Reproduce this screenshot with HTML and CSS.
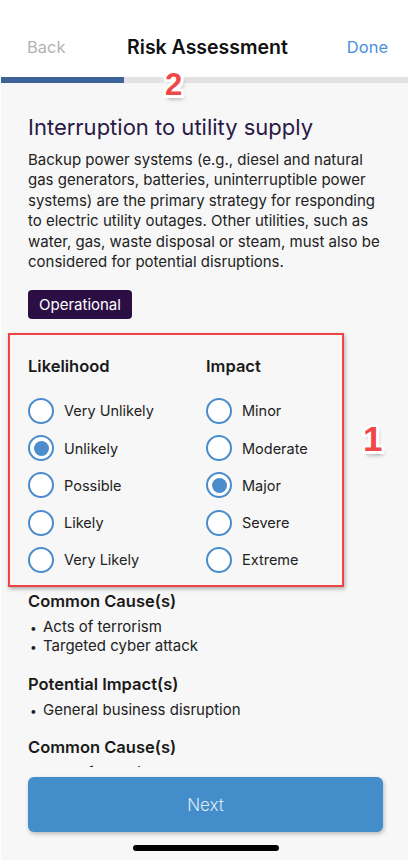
FILE: index.html
```html
<!DOCTYPE html>
<html lang="en">
<head>
<meta charset="utf-8">
<title>Risk Assessment</title>
<link rel="stylesheet" href="styles.css">
</head>
<body>
<div class="screen">
  <header class="nav">
    <span class="nav-back">Back</span>
    <span class="nav-title">Risk Assessment</span>
    <span class="nav-done">Done</span>
  </header>
  <div class="progress"><div class="progress-fill" style="width:123px"></div></div>

  <main class="content">
    <h1 class="risk-title">Interruption to utility supply</h1>
    <p class="risk-desc">Backup power systems (e.g., diesel and natural gas generators, batteries, uninterruptible power systems) are the primary strategy for responding to electric utility outages. Other utilities, such as water, gas, waste disposal or steam, must also be considered for potential disruptions.</p>
    <span class="badge">Operational</span>

    <div class="assessment">
      <div class="group">
        <h2 class="group-title">Likelihood</h2>
        <ul class="options">
          <li class="option"><span class="radio"></span><span class="option-label">Very Unlikely</span></li>
          <li class="option"><span class="radio checked"></span><span class="option-label">Unlikely</span></li>
          <li class="option"><span class="radio"></span><span class="option-label">Possible</span></li>
          <li class="option"><span class="radio"></span><span class="option-label">Likely</span></li>
          <li class="option"><span class="radio"></span><span class="option-label">Very Likely</span></li>
        </ul>
      </div>
      <div class="group">
        <h2 class="group-title">Impact</h2>
        <ul class="options">
          <li class="option"><span class="radio"></span><span class="option-label">Minor</span></li>
          <li class="option"><span class="radio"></span><span class="option-label">Moderate</span></li>
          <li class="option"><span class="radio checked"></span><span class="option-label">Major</span></li>
          <li class="option"><span class="radio"></span><span class="option-label">Severe</span></li>
          <li class="option"><span class="radio"></span><span class="option-label">Extreme</span></li>
        </ul>
      </div>
    </div>

    <section class="info">
      <h3 class="info-title">Common Cause(s)</h3>
      <ul class="bullets">
        <li>Acts of terrorism</li>
        <li>Targeted cyber attack</li>
      </ul>
    </section>
    <section class="info">
      <h3 class="info-title">Potential Impact(s)</h3>
      <ul class="bullets">
        <li>General business disruption</li>
      </ul>
    </section>
    <section class="info">
      <h3 class="info-title">Common Cause(s)</h3>
      <ul class="bullets">
        <li>Acts of terrorism</li>
        <li>Targeted cyber attack</li>
      </ul>
    </section>
  </main>

  <footer class="footer">
    <button class="next-btn" type="button">Next</button>
    <div class="home-indicator"></div>
  </footer>

  <div class="annot-box"></div>
  <span class="marker marker-1">1</span>
  <span class="marker marker-2">2</span>
</div>
</body>
</html>
```

FILE: styles.css
```css
* { box-sizing: border-box; }

html, body {
  margin: 0;
  padding: 0;
  background: #ffffff;
}

body {
  font-family: Inter, "Noto Sans", "Liberation Sans", sans-serif;
  color: #1f1f1f;
}

.screen {
  position: relative;
  width: 407px;
  height: 860px;
  margin-left: 1px;
  background: #f7f7f7;
  display: flex;
  flex-direction: column;
  overflow: hidden;
}

/* Navigation bar */
.nav {
  height: 77px;
  background: #ffffff;
  display: flex;
  align-items: center;
  justify-content: space-between;
  padding: 16px 20px 0 26px;
}

.nav-back {
  font-size: 16.5px;
  color: #b3b3b3;
  width: 60px;
}

.nav-title {
  font-size: 19.5px;
  font-weight: 600;
  color: #111111;
}

.nav-done {
  font-size: 16.5px;
  color: #4a90d9;
  width: 60px;
  text-align: right;
}

.progress {
  height: 6px;
  background: #e2e2e2;
  flex: none;
}

.progress-fill {
  height: 100%;
  background: #3d6399;
}

/* Scroll content */
.content {
  flex: 1;
  min-height: 0;
  overflow: hidden;
  padding: 30px 24px 0 27px;
}

.risk-title {
  margin: 0;
  font-size: 22px;
  line-height: 28px;
  font-weight: 400;
  color: #2a1946;
}

.risk-desc {
  margin: 9px 0 0;
  font-size: 15px;
  line-height: 20.4px;
  color: #222222;
}

.badge {
  display: inline-block;
  margin-top: 18px;
  height: 29px;
  line-height: 29px;
  padding: 0 11px;
  border-radius: 4px;
  background: #2b0f44;
  color: #ffffff;
  font-size: 15px;
}

.assessment {
  display: grid;
  grid-template-columns: 178px 1fr;
  margin-top: 37px;
}

.group-title {
  margin: 0;
  font-size: 16.5px;
  line-height: 20px;
  font-weight: 600;
  color: #1a1a1a;
}

.options {
  list-style: none;
  margin: 22px 0 0;
  padding: 0;
  display: flex;
  flex-direction: column;
  gap: 12.25px;
}

.option {
  display: flex;
  align-items: center;
  height: 25px;
}

.radio {
  flex: none;
  width: 26px;
  height: 26px;
  border: 2px solid #4a8ccc;
  border-radius: 50%;
  display: flex;
  align-items: center;
  justify-content: center;
  background: #ffffff;
}

.radio.checked::after {
  content: "";
  width: 15px;
  height: 15px;
  border-radius: 50%;
  background: #4a8ccc;
}

.option-label {
  margin-left: 10px;
  font-size: 14.5px;
  color: #222222;
}

/* Info sections */
.info {
  margin-top: 17.5px;
}

.info:first-of-type {
  margin-top: 19px;
}

.info-title {
  margin: 0;
  font-size: 16.5px;
  line-height: 20px;
  font-weight: 600;
  color: #1a1a1a;
}

.bullets {
  list-style: none;
  margin: 6.5px 0 0;
  padding: 0 0 0 2px;
}

.bullets li {
  font-size: 15px;
  line-height: 18.3px;
  color: #222222;
}

.bullets li::before {
  content: "\2022";
  display: inline-block;
  width: 13px;
  font-size: 12px;
}

/* Footer */
.footer {
  flex: none;
  height: 93px;
  background: #f7f7f7;
  padding: 10px 0 0 27px;
  position: relative;
}

.next-btn {
  display: block;
  width: 355px;
  height: 55px;
  border: none;
  border-radius: 6px;
  background: #438dcb;
  color: #dde9f5;
  font-family: inherit;
  font-size: 17px;
  font-weight: 300;
  box-shadow: 1px 2px 4px rgba(0, 0, 0, 0.25);
}

.home-indicator {
  width: 146px;
  height: 6px;
  border-radius: 3px;
  background: #000000;
  margin: 13px 0 0 105px;
}

/* Annotations */
.annot-box {
  position: absolute;
  left: 7px;
  top: 333px;
  width: 336px;
  height: 254px;
  border: 2.5px solid #ef4444;
  box-shadow: 1px 2px 4px rgba(0, 0, 0, 0.3);
  pointer-events: none;
}

.marker {
  position: absolute;
  font-family: "Liberation Sans", Arial, sans-serif;
  font-weight: 700;
  color: #f04848;
  line-height: 1;
  text-shadow:
    -2.5px -2.5px 0 #fff, 2.5px -2.5px 0 #fff, -2.5px 2.5px 0 #fff, 2.5px 2.5px 0 #fff,
    0 -3px 0 #fff, 0 3px 0 #fff, -3px 0 0 #fff, 3px 0 0 #fff,
    2px 4px 4px rgba(0, 0, 0, 0.35);
}

.marker-1 {
  left: 362px;
  top: 421px;
  font-size: 35px;
}

.marker-2 {
  left: 164px;
  top: 69px;
  font-size: 31px;
}
```
